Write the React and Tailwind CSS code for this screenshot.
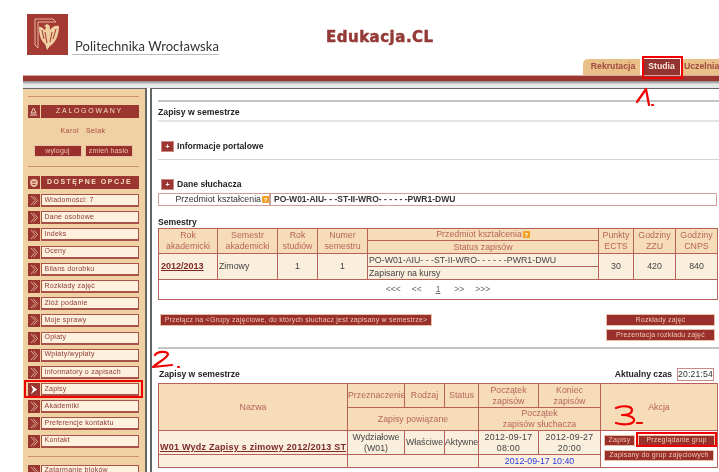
import React from "react";

const items = ["Wiadomości: 7","Dane osobowe","Indeks","Oceny","Bilans dorobku","Rozkłady zajęć","Złóż podanie","Moje sprawy","Opłaty","Wpłaty/wypłaty","Informatory o zapisach","Zapisy","Akademiki","Preferencje kontaktu","Kontakt"];

function Chevron({ active }) {
  return (
    <svg width="10" height="11" viewBox="0 0 10 11" fill="none">
      {active ? (
        <path d="M2 1 L8 5.5 L2 10 L4 5.5 Z" fill="#fff" />
      ) : (
        <g stroke="#e0b8a0" strokeWidth="0.9">
          <path d="M2 1 L6 5.5 L2 10" />
          <path d="M4.5 1 L8.5 5.5 L4.5 10" />
        </g>
      )}
    </svg>
  );
}

function MenuItem({ label, active }) {
  return (
    <div className={"relative flex h-[13px] w-[111px] " + (active ? "z-10" : "")}>
      <div className="flex w-[12px] items-center justify-center bg-[#9b3530]"><Chevron active={active} /></div>
      <div className="ml-px flex flex-1 items-center border border-[#a8524a] border-b-2 bg-[#fdf0dc] pl-[3px] text-[7px] tracking-[0.25px] text-[#8f3a35] whitespace-nowrap">{label}</div>
      {active && <div className="absolute -left-[4px] -right-[4px] -top-[3px] -bottom-[2px] border-2 border-[#f00000]" />}
    </div>
  );
}

function Sep() {
  return <div className="h-px w-[111px] bg-[#d08f70]" />;
}

function SideHead({ icon, label, wide }) {
  return (
    <div className="flex h-[13px] w-[111px]">
      <div className="flex w-[12px] items-center justify-center bg-[#9b3530]">{icon}</div>
      <div className={"ml-px flex flex-1 items-center justify-center bg-[#9b3530] text-[7px] text-[#f4dcc0] " + (wide ? "font-bold tracking-[1.5px]" : "tracking-[1.7px]")}>{label}</div>
    </div>
  );
}

function Plus() {
  return <span className="flex h-[11px] w-[13px] items-center justify-center border border-[#c88] bg-[#9b3530] text-[7px] leading-none text-white">+</span>;
}

function Btn({ children, className = "" }) {
  return <div className={"flex items-center justify-center whitespace-nowrap border border-[#e8c0a8] bg-[#99302c] text-[7px] tracking-[0.2px] text-[#f0c8b0] " + className}>{children}</div>;
}

function Q() {
  return <span className="ml-px inline-flex h-[7px] w-[7px] items-center justify-center rounded-[1px] bg-[#f0a020] align-middle text-[6px] font-bold leading-none text-white">?</span>;
}

const th = "border border-[#b8605a] bg-[#f7dcb8] font-normal text-[#b5655c] text-center p-0 leading-[11px]";
const td = "border border-[#b8605a] bg-[#faeedd] text-[#444] text-center p-0 leading-[11px]";

export default function App() {
  return (
    <div className="relative h-[472px] w-[719px] overflow-hidden bg-white font-['Liberation_Sans',sans-serif] blur-[0.3px]">
      {/* header */}
      <header className="flex h-[75px] pl-[27px]">
        <div className="mt-[14px] flex items-end self-start">
          <svg width="41" height="41" viewBox="0 0 41 41">
            <rect width="41" height="41" fill="#a33a33" />
            <path d="M8 5 L8 31 L11 34 L11 8 L29 8 L26 5 Z" fill="none" stroke="#e8b8a0" strokeWidth="1" />
            <path d="M20 10 L17 12 L19 13 L18 16 C15 13 13 12 12 13 C12 21 14 27 18 30 L20 36 L23 32 C28 29 32 22 32 12 C28 11 25 13 23 16 C23 13 23 11 20 10 Z" fill="#f0d0a0" />
            <path d="M15 16 L17 25 M18 18 L20 29 M25 18 L23 28 M29 15 L26 25" stroke="#a33a33" strokeWidth="1" />
          </svg>
          <div className="ml-[4px] border-b border-[#bbb] pl-[3px] font-['Lato',sans-serif] text-[13px] leading-[15px] tracking-[0.05px] text-[#333]">Politechnika Wrocławska</div>
        </div>
        <div className="ml-[107px] mt-[28px] self-start font-['DejaVu_Sans',sans-serif] text-[15px] font-bold leading-[18px] tracking-[0.5px] text-[#933a36] [-webkit-text-stroke:0.5px_#933a36]">Edukacja.CL</div>
        <div className="ml-auto flex items-end self-end">
          <div className="flex h-[16px] w-[57px] items-center justify-center rounded-tl-[5px] bg-[#e8c088] pl-[3px] text-[8.7px] font-bold text-[#a04a40]">Rekrutacja</div>
          <div className="ml-[3px] flex h-[16px] w-[37px] items-center justify-center bg-[#933330] text-[8.7px] font-bold text-[#f8e8d8]">Studia</div>
          <div className="ml-[2px] flex h-[16px] w-[37px] items-center overflow-hidden rounded-tl-[3px] bg-[#e8c088] pl-[2px] text-[8.7px] font-bold text-[#a04a40]">Uczelnia</div>
        </div>
      </header>
      <div className="ml-[23px] h-[6px] border-t border-[#d8a8a0] bg-[#9b3530]" />
      <div className="ml-[23px] h-[7px] bg-gradient-to-b from-[#888] via-[#e8e8e8] to-[#e8e8e8]" />

      <div className="ml-[23px] flex">
        {/* sidebar */}
        <aside className="flex h-[384px] w-[124px] shrink-0 flex-col items-center border-r-2 border-t border-[#666] bg-[#efd1a3] pl-[1px] pr-[3px]">
          <div className="mt-[7px]"><Sep /></div>
          <div className="mt-[8px]">
            <SideHead label="ZALOGOWANY" icon={<svg width="9" height="9" viewBox="0 0 9 9" fill="none" stroke="#f0d8c0"><path d="M4.5 1 L7 6 L2 6 Z M1 8 H8" /></svg>} />
          </div>
          <div className="mt-[8px] text-[7px] leading-[10px] tracking-[0.4px] text-[#a8483f]">Karol&nbsp;&nbsp;&nbsp;Selak</div>
          <div className="mt-[9px] flex gap-[3px]">
            <Btn className="h-[12px] w-[48px] rounded-[1px]">wyloguj</Btn>
            <Btn className="h-[12px] w-[48px] rounded-[1px]">zmień hasło</Btn>
          </div>
          <div className="mt-[9px]"><Sep /></div>
          <div className="mt-[9px]">
            <SideHead wide label="DOSTĘPNE OPCJE" icon={<svg width="10" height="10" viewBox="0 0 10 10" fill="#e8c0a0"><path d="M5 1 C3 1 1 2 1 4 C1 7 3 9 5 9 C7 9 9 7 9 4 C9 2 7 1 5 1 Z M3 3.5 H7 V4.5 H3 Z M3.5 6 H6.5 V7 H3.5 Z" fillRule="evenodd" /></svg>} />
          </div>
          <div className="mt-[5px] flex flex-col gap-[4.2px]">
            {items.map((l) => <MenuItem key={l} label={l} active={l === "Zapisy"} />)}
          </div>
          <div className="mt-[8px]"><Sep /></div>
          <div className="mt-[8px]"><MenuItem label="Zatarmanie bloków" /></div>
        </aside>

        {/* main */}
        <main className="ml-[3px] w-[572px] shrink-0 border-l-2 border-t border-[#666] pl-[6px]">
          <div className="mt-[11px] border-y-2 border-b-[#e4e4e4] border-t-[#c4c4c4] pt-[5px] pb-[3px] text-[8.7px] font-bold leading-[10px] text-[#222]">Zapisy w semestrze</div>
          <div className="mt-[19px] flex items-center gap-[3px] pl-[3px] text-[8.6px] font-bold leading-[11px] text-[#222]"><Plus />Informacje portalowe</div>
          <div className="mt-[7px] h-px bg-[#d4d4d4]" />
          <div className="mt-[19px] flex items-center gap-[3px] pl-[3px] text-[8.6px] font-bold leading-[11px] text-[#222]"><Plus />Dane słuchacza</div>

          <div className="mt-[3px] flex h-[13px] w-[559px] border border-[#d0a098] text-[8.8px] text-[#333]">
            <div className="flex w-[112px] items-center justify-end whitespace-nowrap border-r-2 border-[#d0a098]">Przedmiot kształcenia<Q /></div>
            <div className="flex items-center pl-[3px]"><b className="text-[8.5px] font-semibold">PO-W01-AIU- - -ST-II-WRO- - - - - -PWR1-DWU</b></div>
          </div>

          <div className="mt-[11px] text-[8.6px] font-bold leading-[10px] text-[#222]">Semestry</div>
          <table className="mt-[1px] w-[559px] table-fixed border-collapse text-[8.8px]">
            <colgroup>
              <col className="w-[59px]" /><col className="w-[60px]" /><col className="w-[40px]" /><col className="w-[50px]" /><col className="w-[231px]" /><col className="w-[35px]" /><col className="w-[42px]" /><col className="w-[42px]" />
            </colgroup>
            <tbody>
              <tr className="h-[12px]">
                <th rowSpan={2} className={th}>Rok<br />akademicki</th>
                <th rowSpan={2} className={th}>Semestr<br />akademicki</th>
                <th rowSpan={2} className={th}>Rok<br />studiów</th>
                <th rowSpan={2} className={th}>Numer<br />semestru</th>
                <th className={th}>Przedmiot kształcenia<Q /></th>
                <th rowSpan={2} className={th}>Punkty<br />ECTS</th>
                <th rowSpan={2} className={th}>Godziny<br />ZZU</th>
                <th rowSpan={2} className={th}>Godziny<br />CNPS</th>
              </tr>
              <tr className="h-[13px]"><th className={th}>Status zapisów</th></tr>
              <tr className="h-[13px]">
                <td rowSpan={2} className={td + " !text-left pl-[2px] text-[9px] font-bold !text-[#7d2a28] underline"}>2012/2013</td>
                <td rowSpan={2} className={td + " !text-left pl-px"}>Zimowy</td>
                <td rowSpan={2} className={td}>1</td>
                <td rowSpan={2} className={td}>1</td>
                <td className={td + " !text-left pl-px"}>PO-W01-AIU- - -ST-II-WRO- - - - - -PWR1-DWU</td>
                <td rowSpan={2} className={td}>30</td>
                <td rowSpan={2} className={td}>420</td>
                <td rowSpan={2} className={td}>840</td>
              </tr>
              <tr className="h-[13px]"><td className={td + " !text-left pl-px"}>Zapisany na kursy</td></tr>
              <tr className="h-[20px]">
                <td colSpan={8} className="border border-[#b8605a] text-center text-[8.5px] text-[#666]">
                  <span className="inline-flex gap-[11px]"><span>&lt;&lt;&lt;</span><span>&lt;&lt;</span><span className="mx-[3px] underline">1</span><span>&gt;&gt;</span><span>&gt;&gt;&gt;</span></span>
                </td>
              </tr>
            </tbody>
          </table>

          <div className="mt-[14px] flex w-[559px] items-start justify-between pl-[2px] pr-[2px]">
            <Btn className="h-[12px] w-[272px]">Przełącz na &lt;Grupy zajęciowe, do których słuchacz jest zapisany w semestrze&gt;</Btn>
            <div className="flex flex-col gap-[3px]">
              <Btn className="h-[12px] w-[109px]">Rozkłady zajęć</Btn>
              <Btn className="h-[12px] w-[109px]">Prezentacja rozkładu zajęć</Btn>
            </div>
          </div>
          <div className="mt-[6px] h-[2px] bg-[#c4c4c4]" />

          <div className="mt-[17px] flex h-[16px] w-[559px] items-center justify-between pl-px pr-[3px] text-[8.6px] font-bold text-[#222]">
            <span>Zapisy w semestrze</span>
            <span className="flex items-center gap-[5px]">Aktualny czas<span className="flex h-[13px] w-[37px] items-center justify-center border border-[#c88] text-[8.6px] font-normal tracking-[0.2px] text-[#333]">20:21:54</span></span>
          </div>

          <table className="mt-[1px] w-[559px] table-fixed border-collapse text-[8.8px]">
            <colgroup>
              <col className="w-[189px]" /><col className="w-[57px]" /><col className="w-[40px]" /><col className="w-[34px]" /><col className="w-[60px]" /><col className="w-[62px]" /><col className="w-[117px]" />
            </colgroup>
            <tbody>
              <tr className="h-[24px]">
                <th rowSpan={2} className={th}>Nazwa</th>
                <th className={th}>Przeznaczenie</th>
                <th className={th}>Rodzaj</th>
                <th className={th}>Status</th>
                <th className={th}>Początek<br />zapisów</th>
                <th className={th}>Koniec<br />zapisów</th>
                <th rowSpan={2} className={th}>Akcja</th>
              </tr>
              <tr className="h-[23px]">
                <th colSpan={3} className={th}>Zapisy powiązane</th>
                <th colSpan={2} className={th}>Początek<br />zapisów słuchacza</th>
              </tr>
              <tr className="h-[24px]">
                <td className={td + " align-bottom !text-left pb-[1px] pl-px text-[9px] font-bold tracking-[0.25px] !text-[#7d2a28] underline whitespace-nowrap"}>W01 Wydz Zapisy s zimowy 2012/2013 ST</td>
                <td className={td}>Wydziałowe<br />(W01)</td>
                <td className={td}>Właściwe</td>
                <td className={td}>Aktywne</td>
                <td className={td + " tracking-[0.3px]"}>2012-09-17<br />08:00</td>
                <td className={td + " tracking-[0.3px]"}>2012-09-27<br />20:00</td>
                <td rowSpan={2} className={"border border-[#b8605a] bg-white p-0 align-top"}>
                  <div className="mt-[4px] flex gap-[3px] pl-[3px]">
                    <Btn className="h-[11px] w-[31px]">Zapisy</Btn>
                    <Btn className="h-[11px] w-[77px]">Przeglądanie grup</Btn>
                  </div>
                  <Btn className="ml-[3px] mt-[4px] h-[11px] w-[110px]">Zapisany do grup zajęciowych</Btn>
                </td>
              </tr>
              <tr className="h-[13px]">
                <td className={td}></td>
                <td colSpan={3} className={td}></td>
                <td colSpan={2} className={td + " !text-[#2a3ae0]"}>2012-09-17 10:40</td>
              </tr>
            </tbody>
          </table>
        </main>
      </div>

      {/* annotations */}
      <div className="absolute left-[642px] top-[56px] h-[23px] w-[41px] border-2 border-[#f00000]" />
      <div className="absolute left-[636px] top-[432px] h-[15px] w-[81px] border-2 border-[#f00000]" />
      <svg className="absolute left-0 top-0" width="719" height="472" viewBox="0 0 719 472" fill="none" stroke="#f00000" strokeWidth="2.2" strokeLinecap="round" strokeLinejoin="round">
        <path d="M637 102 L646 89 L649 105" />
        <path d="M652 105 h1" />
        <path d="M155 355 C158 351 167 351 168 354 C168 358 158 362 153 367 L172 365" />
        <path d="M178 367 h1" />
        <path d="M616 408 C622 405 632 406 632 410 C632 414 626 415 622 415 C628 415 635 417 634 421 C632 425 622 425 616 423" />
        <path d="M637 423 h5" />
      </svg>
    </div>
  );
}
